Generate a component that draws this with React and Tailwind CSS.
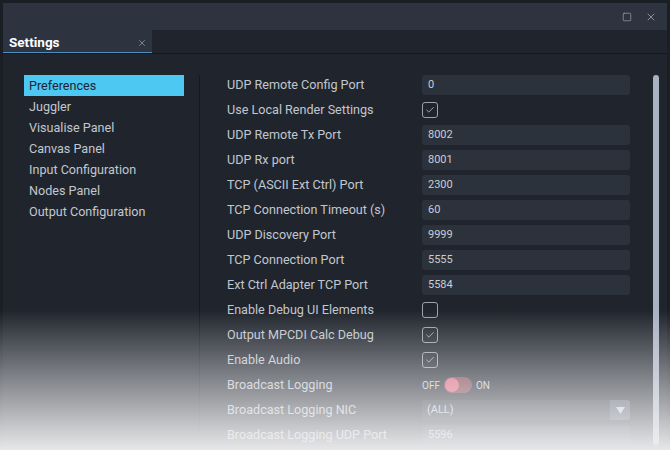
import { X, Square, Check } from "lucide-react";

const menu = [
  "Preferences",
  "Juggler",
  "Visualise Panel",
  "Canvas Panel",
  "Input Configuration",
  "Nodes Panel",
  "Output Configuration",
];

const rows = [
  { label: "UDP Remote Config Port", type: "input", value: "0" },
  { label: "Use Local Render Settings", type: "check", value: true },
  { label: "UDP Remote Tx Port", type: "input", value: "8002" },
  { label: "UDP Rx port", type: "input", value: "8001" },
  { label: "TCP (ASCII Ext Ctrl) Port", type: "input", value: "2300" },
  { label: "TCP Connection Timeout (s)", type: "input", value: "60" },
  { label: "UDP Discovery Port", type: "input", value: "9999" },
  { label: "TCP Connection Port", type: "input", value: "5555" },
  { label: "Ext Ctrl Adapter TCP Port", type: "input", value: "5584" },
  { label: "Enable Debug UI Elements", type: "check", value: false },
  { label: "Output MPCDI Calc Debug", type: "check", value: true },
  { label: "Enable Audio", type: "check", value: true },
  { label: "Broadcast Logging", type: "toggle" },
  { label: "Broadcast Logging NIC", type: "select", value: "(ALL)" },
  { label: "Broadcast Logging UDP Port", type: "input", value: "5596" },
];

const Field = ({ row }) => {
  if (row.type === "input") {
    return (
      <div className="w-[208px] h-[20px] rounded-[3px] bg-[#2c323c] flex items-center px-[6px] text-[11px] text-[#c9cdd4]">
        {row.value}
      </div>
    );
  }
  if (row.type === "check") {
    return (
      <div className="w-[16px] h-[16px] rounded-[3px] border border-[#9aa1ad] flex items-center justify-center">
        {row.value && <Check size={10} strokeWidth={1.75} className="text-[#d0d4db]" />}
      </div>
    );
  }
  if (row.type === "toggle") {
    return (
      <div className="flex items-center gap-[4px] text-[10px] text-[#c9cdd4]">
        <span>OFF</span>
        <div className="w-[28px] h-[16px] rounded-full bg-[#7a3a48] flex items-center px-[1px]">
          <div className="w-[14px] h-[14px] rounded-full bg-[#e0607a]" />
        </div>
        <span>ON</span>
      </div>
    );
  }
  return (
    <div className="w-[208px] h-[20px] rounded-[3px] bg-[#2c323c] flex items-center text-[11px] text-[#c9cdd4] overflow-hidden">
      <span className="flex-1 px-[5px]">{row.value}</span>
      <div className="w-[20px] h-full bg-[#4a5160] flex items-center justify-center">
        <svg width="9" height="7" viewBox="0 0 9 7">
          <path d="M0 0 L9 0 L4.5 7 Z" fill="#c9ced8" />
        </svg>
      </div>
    </div>
  );
};

const App = () => {
  return (
    <div
      className="w-[670px] h-[450px] bg-[#1a1e25] p-[3px] relative overflow-hidden"
      style={{ fontFamily: "Roboto, 'Liberation Sans', sans-serif" }}
    >
      <div className="flex flex-col h-full bg-[#20252d]">
        {/* TITLE BAR */}
        <div className="h-[27px] bg-[#2d333f] flex items-center justify-end gap-[13px] pr-[10px] text-[#a9b0bc]">
          <Square size={10} strokeWidth={1.5} />
          <X size={12} strokeWidth={1.5} />
        </div>

        {/* TAB ROW */}
        <div className="h-[24px] flex border-b border-[#15191e]">
          <div className="w-[149px] bg-[#2d333f] border-b border-[#4f8fc0] flex items-center justify-between pl-[6px] pr-[5px] pt-[3px]">
            <span className="text-[13.5px] font-bold text-white">Settings</span>
            <X size={10} strokeWidth={1.5} className="text-[#a9b0bc]" />
          </div>
          <div className="flex-1 bg-[#20252d]" />
        </div>

        {/* CONTENT */}
        <div className="flex flex-1 pt-[21px]">
          <div className="pl-[21px] pr-[15px] w-[196px]">
            {menu.map((m, i) => (
              <div
                key={m}
                className={
                  i === 0
                    ? "h-[21px] w-[160px] bg-[#4cc8f2] text-[#1d2430] text-[12.6px] flex items-center pl-[5px] pt-px"
                    : "h-[21px] w-[160px] text-[#c2c7cf] text-[12.6px] flex items-center pl-[5px] pt-px"
                }
              >
                {m}
              </div>
            ))}
          </div>
          <div className="w-px bg-[#15191e]" />
          <div className="flex-1 pl-[27px] flex flex-col gap-[5px]">
            {rows.map((r) => (
              <div key={r.label} className="h-[20px] flex items-center">
                <div className="w-[195px] text-[12.6px] text-[#c2c7cf]">{r.label}</div>
                <Field row={r} />
              </div>
            ))}
          </div>
          <div className="w-[25px] flex justify-center pl-[3px]">
            <div className="w-[6px] h-[370px] rounded-full bg-[#a9b2c3]" />
          </div>
        </div>
      </div>

      {/* BOTTOM FADE */}
      <div className="absolute left-0 right-0 bottom-0 h-[140px] bg-gradient-to-b from-transparent to-[#f2f2f4]/95 pointer-events-none" />
    </div>
  );
};

export default App;
